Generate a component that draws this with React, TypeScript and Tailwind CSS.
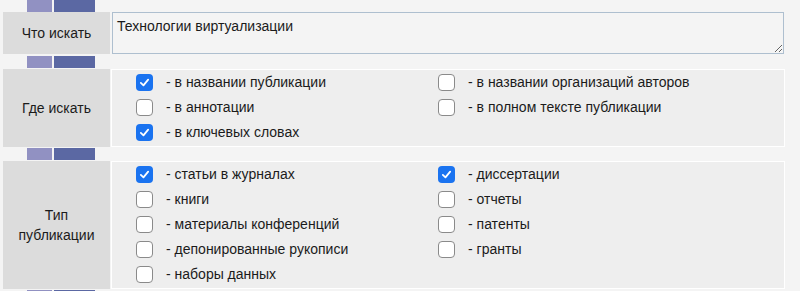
import React from "react"

const font = { fontFamily: '"Liberation Sans", Arial, sans-serif' }

function Bars() {
  return (
    <div className="flex h-[12px] pl-[24px] gap-[2px]">
      <div className="w-[25px] bg-[#9191c2]" />
      <div className="w-[41px] bg-[#5b68a3]" />
    </div>
  )
}

function Box({ checked }: { checked?: boolean }) {
  if (checked) {
    return (
      <span className="flex h-[17px] w-[17px] shrink-0 items-center justify-center rounded-[4px] bg-[#1a73f0]">
        <svg viewBox="0 0 16 16" className="h-[13px] w-[13px]">
          <path d="M3.5 8.5 L6.7 11.5 L12.5 4.5" fill="none" stroke="#fff" strokeWidth="2.2" strokeLinecap="round" strokeLinejoin="round" />
        </svg>
      </span>
    )
  }
  return <span className="h-[17px] w-[17px] shrink-0 rounded-[4px] border-[1.5px] border-[#8a8a8a] bg-white" />
}

function Item({ label, checked }: { label: string; checked?: boolean }) {
  return (
    <label className="flex h-[25px] items-center">
      <Box checked={checked} />
      <span className="ml-[13px] text-[14px] text-[#1b1b1b]">- {label}</span>
    </label>
  )
}

function Label({ children }: { children: React.ReactNode }) {
  return (
    <div className="flex w-[107px] shrink-0 items-center justify-center bg-[#dcdcdc] text-center text-[14px] leading-[20px] text-[#1b1b1b]">
      {children}
    </div>
  )
}

export default function App() {
  return (
    <div className="min-h-[291px] w-[800px] overflow-hidden bg-[#f4f4f4] pl-[3px]" style={font}>
      <Bars />
      <div className="flex h-[42px] gap-[2px]">
        <Label>Что искать</Label>
        <textarea
          defaultValue="Технологии виртуализации"
          className="h-[42px] w-[672px] resize-y border border-[#aebfcf] bg-[#f4f4f4] px-[4px] pt-[3px] text-[14px] text-[#1b1b1b] outline-none"
          style={font}
        />
      </div>
      <div className="mt-[2px]">
        <Bars />
      </div>
      <div className="mt-[1px] flex h-[78px] gap-[1px]">
        <Label>Где искать</Label>
        <div className="grid w-[674px] grid-cols-[302px_1fr] content-start border border-white bg-[#eeeeee] pl-[24px]">
          <Item label="в названии публикации" checked />
          <Item label="в названии организаций авторов" />
          <Item label="в аннотации" />
          <Item label="в полном тексте публикации" />
          <Item label="в ключевых словах" checked />
        </div>
      </div>
      <div className="mt-[1px]">
        <Bars />
      </div>
      <div className="mt-[1px] flex h-[128px] gap-[1px]">
        <Label>
          Тип
          <br />
          публикации
        </Label>
        <div className="grid w-[674px] grid-cols-[302px_1fr] content-start border border-white bg-[#eeeeee] pl-[24px]">
          <Item label="статьи в журналах" checked />
          <Item label="диссертации" checked />
          <Item label="книги" />
          <Item label="отчеты" />
          <Item label="материалы конференций" />
          <Item label="патенты" />
          <Item label="депонированные рукописи" />
          <Item label="гранты" />
          <Item label="наборы данных" />
        </div>
      </div>
      <div className="mt-[1px]">
        <Bars />
      </div>
    </div>
  )
}
